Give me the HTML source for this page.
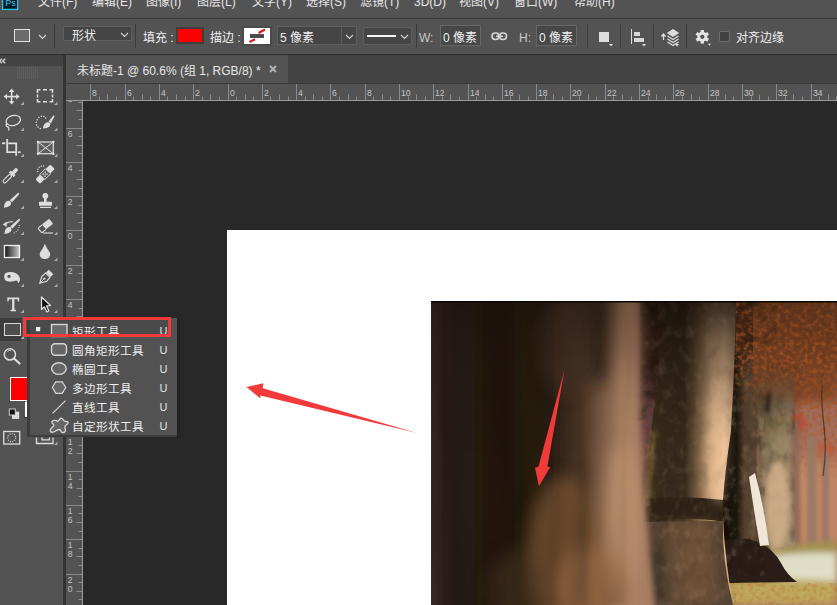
<!DOCTYPE html>
<html lang="zh-CN">
<head>
<meta charset="utf-8">
<style>
*{margin:0;padding:0;box-sizing:border-box}
html,body{width:837px;height:605px;overflow:hidden;background:#282828;font-family:"Liberation Sans",sans-serif;color:#e0e0e0;font-size:12px}
.a{position:absolute}
#menubar{left:0;top:0;width:837px;height:18px;background:#535353}
#mline{left:0;top:18px;width:837px;height:1px;background:#3a3a3a}
#opts{left:0;top:19px;width:837px;height:35px;background:#535353}
#oline{left:0;top:53.5px;width:837px;height:1.5px;background:#2e2e2e}
.mi{top:-5px;font-size:12px;line-height:14px;color:#e6e6e6;white-space:nowrap}
#tools{left:0;top:55px;width:63px;height:550px;background:#535353}
#thead{left:0;top:55px;width:63px;height:11px;background:#434343}
#tborder{left:63px;top:55px;width:3px;height:550px;background:#333}
#tabbar{left:66px;top:55px;width:771px;height:28px;background:#434343}
#tab{left:66px;top:55px;width:222px;height:28px;background:#535353}
#hruler{left:66px;top:83px;width:771px;height:18px;background:#535353}
#vruler{left:66px;top:83px;width:17px;height:522px;background:#535353}
#doc{left:227px;top:230px;width:610px;height:375px;background:#fff}
#photo{left:431px;top:301px;width:406px;height:304px;background:#3a2a20;overflow:hidden}
.sep{top:24px;width:1px;height:24px;background:#3b3b3b}
.box{border:1px solid #5f5f5f;background:#454545}
.box2{border:1px solid #676767;background:#474747}
.ot{font-size:12px;line-height:14px;color:#f0f0f0;white-space:nowrap}
.tabt{font-size:12px;line-height:16px;color:#e8e8e8;white-space:nowrap}
.mt{font-size:11.6px;line-height:15px;color:#eeeeee;white-space:nowrap}
.mu{font-size:11px;line-height:15px;color:#e4e4e4}
</style>
</head>
<body>
<div class="a" id="menubar"></div>
<div class="a" id="mline"></div>
<div class="a" id="opts"></div>
<div class="a" id="oline"></div>
<div class="a" id="tools"></div>
<div class="a" id="thead"></div>
<div class="a" id="tborder"></div>
<div class="a" id="tabbar"></div>
<div class="a" id="tab"></div>
<div class="a" id="hruler"></div>
<div class="a" id="vruler"></div>
<div class="a" id="doc"></div>
<div class="a" id="photo"></div>

<!-- tools -->
<svg class="a" style="left:0;top:0" width="63" height="605">
<!-- header -->
<path d="M2 58.8 L-0.5 61 L2 63.2 M5.3 58.8 L2.8 61 L5.3 63.2" stroke="#d8d8d8" stroke-width="1.3" fill="none"/>
<g stroke="#5c5c5c" stroke-width="1"><path d="M17.5 67V79 M19.5 67V79 M21.5 67V79 M23.5 67V79 M25.5 67V79 M27.5 67V79 M29.5 67V79 M31.5 67V79 M33.5 67V79 M35.5 67V79 M37.5 67V79"/></g>
<!-- move -->
<g fill="#dedede" stroke="none">
<rect x="6" y="95.8" width="11.2" height="1.6"/><rect x="10.8" y="91" width="1.6" height="11.2"/>
<path d="M11.6 88.6 L8.8 92 L14.4 92Z M11.6 104.6 L8.8 101.2 L14.4 101.2Z M3.6 96.6 L7 93.8 L7 99.4Z M19.6 96.6 L16.2 93.8 L16.2 99.4Z"/>
</g>
<path d="M20.5 105 L24 101.5 L24 105Z" fill="#a8a8a8"/>
<!-- marquee -->
<g stroke="#dedede" stroke-width="1.5" fill="none">
<path d="M37.5 93 V89.8 H40.5 M43 89.8 H47 M49.5 89.8 H52.5 V93 M52.5 94.6 V97.6 M52.5 99 V101.8 H49.5 M47 101.8 H43 M40.5 101.8 H37.5 V99 M37.5 97.6 V94.6"/>
</g>
<path d="M54 105 L57.5 101.5 L57.5 105Z" fill="#a8a8a8"/>
<!-- lasso -->
<ellipse cx="13.3" cy="120.5" rx="7.3" ry="5" transform="rotate(-15 13.3 120.5)" stroke="#dedede" stroke-width="1.3" fill="none"/>
<path d="M6.5 123 Q5.5 126.5 8 127 Q9.5 127.5 8.5 130.5" stroke="#dedede" stroke-width="1.3" fill="none"/>
<path d="M20.5 131 L24.0 127.5 L24.0 131Z" fill="#a8a8a8"/>
<!-- quick select -->
<g fill="#dedede"><circle cx="39" cy="117.5" r="0.75"/><circle cx="41.3" cy="116.3" r="0.75"/><circle cx="43.8" cy="116.6" r="0.75"/><circle cx="37.2" cy="119.7" r="0.75"/><circle cx="36.3" cy="122.3" r="0.75"/><circle cx="36.6" cy="124.9" r="0.75"/><circle cx="38" cy="127.1" r="0.75"/><circle cx="40.3" cy="128.4" r="0.75"/><circle cx="45.6" cy="118" r="0.75"/></g>
<path d="M42.8 128.5 Q43.5 123.8 47 122.3 Q49 122 50.3 123.5 Q50.5 126.5 47.5 127.8 Q45.3 128.6 42.8 128.5Z" fill="#dedede"/>
<path d="M48.5 121.5 L53.5 115.6 Q54.6 115 54.4 116.4 L51 123.3Z" fill="#dedede"/>
<path d="M54 131 L57.5 127.5 L57.5 131Z" fill="#a8a8a8"/>
<!-- crop -->
<g stroke="#dedede" stroke-width="1.8" fill="none">
<path d="M7.2 139 V152.2 H16.2"/><path d="M8.3 143.3 H16.2 V155.8"/><path d="M2 143.3 H5.3"/><path d="M18 152.2 H20.7"/>
</g>
<path d="M20.5 157 L24.0 153.5 L24.0 157Z" fill="#a8a8a8"/>
<!-- frame -->
<rect x="38" y="142" width="15.3" height="11.7" fill="#5e5e5e" stroke="#dedede" stroke-width="1.2"/>
<path d="M38 142 L53.3 153.7 M53.3 142 L38 153.7" stroke="#dedede" stroke-width="1"/>
<g fill="#dedede"><circle cx="38" cy="142" r="1.3"/><circle cx="53.3" cy="142" r="1.3"/><circle cx="38" cy="153.7" r="1.3"/><circle cx="53.3" cy="153.7" r="1.3"/></g>
<path d="M54 157 L57.5 153.5 L57.5 157Z" fill="#a8a8a8"/>
<!-- eyedropper -->
<g transform="rotate(45 12 174)">
<rect x="10.3" y="175.5" width="3.4" height="10.5" rx="1.7" stroke="#dedede" stroke-width="1.1" fill="none"/>
<rect x="8.6" y="172.4" width="6.8" height="2.8" fill="#dedede"/>
<rect x="10.2" y="166.5" width="3.6" height="6.5" rx="1.6" fill="#dedede"/>
</g>
<path d="M20.5 183 L24 179.5 L24 183Z" fill="#a8a8a8"/>
<!-- healing -->
<g fill="#dedede"><circle cx="37.6" cy="171.5" r="0.7"/><circle cx="37.9" cy="169.2" r="0.7"/><circle cx="39.2" cy="167.3" r="0.7"/><circle cx="41.2" cy="166.2" r="0.7"/><circle cx="43.5" cy="166" r="0.7"/></g>
<g transform="rotate(-45 45 174)">
<rect x="34.5" y="171" width="21" height="6.4" rx="1.2" fill="#dedede"/>
<rect x="41" y="170.6" width="8" height="7.2" fill="#535353" stroke="#dedede" stroke-width="0.9"/>
<g fill="#dedede"><circle cx="43.6" cy="172.9" r="0.85"/><circle cx="46.4" cy="172.9" r="0.85"/><circle cx="43.6" cy="175.5" r="0.85"/><circle cx="46.4" cy="175.5" r="0.85"/><circle cx="45" cy="174.2" r="0.6"/></g>
</g>
<path d="M54 183 L57.5 179.5 L57.5 183Z" fill="#a8a8a8"/>
<!-- brush -->
<path d="M3.8 207.8 Q4 203.5 6.3 201.6 Q8.6 200 10.6 201.4 Q11.6 203.6 10.2 205.5 Q8 207.6 3.8 207.8Z" fill="#dedede"/>
<path d="M9.8 200.2 L17.6 193.3 Q19 192.4 19.2 193.2 Q19.3 194 18.3 195.2 L12 202.3Z" fill="#dedede"/>
<path d="M20.5 209 L24 205.5 L24 209Z" fill="#a8a8a8"/>
<!-- stamp -->
<circle cx="45.3" cy="195.8" r="2.9" fill="#dedede"/>
<rect x="44" y="197.5" width="2.6" height="5" fill="#dedede"/>
<rect x="39" y="201.8" width="13" height="4" rx="0.6" fill="#dedede"/>
<rect x="40" y="206.8" width="11" height="1.2" fill="#dedede"/>
<path d="M54 209 L57.5 205.5 L57.5 209Z" fill="#a8a8a8"/>
<!-- history brush -->
<path d="M4.3 234 Q4.5 229.7 6.8 227.8 Q9.1 226.2 11.1 227.6 Q12.1 229.8 10.7 231.7 Q8.5 233.8 4.3 234Z" fill="#dedede"/>
<path d="M10.3 226.4 L18.4 219.3 Q19.8 218.4 20 219.2 Q20.1 220 19.1 221.2 L12.5 228.5Z" fill="#dedede"/>
<path d="M2.8 224.6 L6.8 221.6 L6.6 227Z" fill="#dedede"/><path d="M5.8 223.8 Q9 221 13 222" stroke="#dedede" stroke-width="1.1" fill="none"/>
<g fill="#dedede"><circle cx="19.3" cy="225.3" r="0.6"/><circle cx="18.9" cy="227.6" r="0.6"/><circle cx="17.9" cy="229.8" r="0.6"/><circle cx="16.2" cy="231.6" r="0.6"/><circle cx="14.2" cy="232.9" r="0.6"/></g>
<path d="M20.5 235 L24 231.5 L24 235Z" fill="#a8a8a8"/>
<!-- eraser -->
<g transform="rotate(-38 46 226)">
<rect x="44" y="222.3" width="9" height="6.4" rx="0.8" fill="#dedede"/>
<path d="M44 222.8 H39.2 Q38.4 222.8 38.4 223.6 V227.9 Q38.4 228.7 39.2 228.7 H44" fill="none" stroke="#dedede" stroke-width="1.1"/>
</g>
<path d="M43 233 H53" stroke="#dedede" stroke-width="1.1"/>
<path d="M54 235 L57.5 231.5 L57.5 235Z" fill="#a8a8a8"/>
<!-- gradient -->
<defs><linearGradient id="gr" x1="0" x2="1"><stop offset="0" stop-color="#111"/><stop offset="1" stop-color="#c8c8c8"/></linearGradient></defs>
<rect x="4.5" y="245.5" width="15" height="12" fill="url(#gr)" stroke="#f0f0f0" stroke-width="1.3"/>
<path d="M20.5 261 L24.0 257.5 L24.0 261Z" fill="#a8a8a8"/>
<!-- drop -->
<path d="M44.9 243.7 Q46.5 248 48.5 250.5 Q50.5 253 50 255.5 Q49 259 44.9 259 Q40.8 259 39.8 255.5 Q39.3 253 41.3 250.5 Q43.3 248 44.9 243.7Z" fill="#dedede"/>
<path d="M54 261 L57.5 257.5 L57.5 261Z" fill="#a8a8a8"/>
<!-- dodge -->
<path d="M4.2 277 Q3.8 273 8 272.2 Q12 271.5 15.5 273 Q19 274.5 20 278.5 Q20.2 281.5 18.5 283.2 Q18 281 16.5 280.5 Q11 282.5 6.5 281 Q4.3 280 4.2 277Z" fill="#dedede"/>
<circle cx="9" cy="276.3" r="1.6" fill="#535353"/>
<path d="M20.5 287 L24.0 283.5 L24.0 287Z" fill="#a8a8a8"/>
<!-- pen -->
<g transform="rotate(45 45 278)">
<path d="M42 274 L48 274 L48.5 279 L45 285.5 L41.5 279Z" fill="none" stroke="#dedede" stroke-width="1.1"/>
<rect x="41.8" y="269.5" width="6.4" height="3.8" fill="#dedede"/>
<path d="M45 279 V285" stroke="#dedede" stroke-width="0.9"/><circle cx="45" cy="278.8" r="1" fill="#dedede"/>
</g>
<path d="M54 287 L57.5 283.5 L57.5 287Z" fill="#a8a8a8"/>
<!-- type -->
<path d="M7.3 297.5 H19.2 V301.5 H18 L17.5 299.3 H14.4 V309.5 L16 310 V311.2 H10.5 V310 L12.1 309.5 V299.3 H9 L8.5 301.5 H7.3Z" fill="#dedede"/>
<path d="M20.5 313 L24.0 309.5 L24.0 313Z" fill="#a8a8a8"/>
<!-- path select -->
<path d="M41.5 297 V309.5 L44.4 306.8 L46.8 312 L48.8 311 L46.5 305.8 L50.5 305.5Z" fill="#111" stroke="#e4e4e4" stroke-width="1.2" stroke-linejoin="round"/>
<path d="M54 313 L57.5 309.5 L57.5 313Z" fill="#a8a8a8"/>
</svg>
<!-- lower tools -->
<div class="a" style="left:0;top:318px;width:22px;height:23px;background:#3c3c3c"></div>
<div class="a" style="left:4px;top:323px;width:16.5px;height:13px;border:1.5px solid #d8d8d8;background:#4e4e4e"></div>
<svg class="a" style="left:20px;top:335px" width="5" height="5"><path d="M0.5 4 L4 0.5 L4 4Z" fill="#a8a8a8"/></svg>
<svg class="a" style="left:0;top:340px" width="63" height="120">
<circle cx="9.9" cy="14.4" r="5.6" stroke="#dedede" stroke-width="1.5" fill="none"/>
<path d="M7.5 11.5 Q9 10 11 10.5" stroke="#dedede" stroke-width="0.8" fill="none"/>
<path d="M14 18.5 L19.5 23.5" stroke="#dedede" stroke-width="2.2" stroke-linecap="round"/>
<rect x="9" y="36" width="20" height="26" fill="#2a2a2a"/>
<rect x="10.4" y="37.4" width="19" height="23.2" fill="#ff0000" stroke="#fff" stroke-width="1.2"/>
<rect x="24" y="61" width="4" height="16.5" fill="#2a2a2a"/>
<rect x="24.8" y="61.5" width="2.6" height="15.5" fill="#fff"/>
<rect x="12" y="71.6" width="7.2" height="7.3" fill="#dcdcdc"/>
<rect x="9.3" y="69" width="6" height="6" fill="#111" stroke="#dcdcdc" stroke-width="0.9"/>
<rect x="3.7" y="91.5" width="16" height="12.5" stroke="#dedede" stroke-width="1.3" fill="none"/>
<circle cx="11.7" cy="97.7" r="4" stroke="#dedede" stroke-width="1.2" fill="none" stroke-dasharray="0.9 1.4"/>
<path d="M36.5 97.5 V103.5 H53 V97.5 M42 97.5 V99.8 H49.5 V97.5" stroke="#dedede" stroke-width="1.3" fill="none"/>
<path d="M54 105 L57.5 101.5 L57.5 105Z" fill="#a8a8a8"/>
</svg>
<!--PHOTO-->
<svg class="a" style="left:431px;top:301px" width="406" height="304" viewBox="0 0 406 304">
<defs>
<filter id="b8" x="-50%" y="-50%" width="200%" height="200%"><feGaussianBlur stdDeviation="8"/></filter>
<filter id="b5" x="-50%" y="-50%" width="200%" height="200%"><feGaussianBlur stdDeviation="5"/></filter>
<filter id="b3" x="-50%" y="-50%" width="200%" height="200%"><feGaussianBlur stdDeviation="3"/></filter>
<filter id="b2" x="-50%" y="-50%" width="200%" height="200%"><feGaussianBlur stdDeviation="2"/></filter>
<filter id="b1" x="-50%" y="-50%" width="200%" height="200%"><feGaussianBlur stdDeviation="1"/></filter>
<filter id="b06" x="-50%" y="-50%" width="200%" height="200%"><feGaussianBlur stdDeviation="0.6"/></filter>
<filter id="streak" x="0" y="0" width="100%" height="100%" color-interpolation-filters="sRGB">
 <feTurbulence type="fractalNoise" baseFrequency="0.05 0.004" numOctaves="2" seed="7"/>
 <feColorMatrix type="matrix" values="0 0 0 0 0  0 0 0 0 0  0 0 0 0 0  0 -2 0 0 1.1"/>
 <feGaussianBlur stdDeviation="2"/>
</filter>
<filter id="mottleD" x="0" y="0" width="100%" height="100%" color-interpolation-filters="sRGB">
 <feTurbulence type="fractalNoise" baseFrequency="0.09 0.06" numOctaves="3" seed="11"/>
 <feColorMatrix type="matrix" values="0 0 0 0 0.12  0 0 0 0 0.09  0 0 0 0 0.05  0 -2.5 0 0 1.35"/>
 <feGaussianBlur stdDeviation="0.7"/>
</filter>
<filter id="mottleL" x="0" y="0" width="100%" height="100%" color-interpolation-filters="sRGB">
 <feTurbulence type="fractalNoise" baseFrequency="0.11 0.08" numOctaves="3" seed="4"/>
 <feColorMatrix type="matrix" values="0 0 0 0 0.85  0 0 0 0 0.74  0 0 0 0 0.6  0 2.5 0 0 -1.25"/>
 <feGaussianBlur stdDeviation="0.7"/>
</filter>
<filter id="leaves" x="0" y="0" width="100%" height="100%" color-interpolation-filters="sRGB">
 <feTurbulence type="fractalNoise" baseFrequency="0.22" numOctaves="3" seed="21"/>
 <feColorMatrix type="matrix" values="0 0 0 0 0.7  0 0 0 0 0.36  0 0 0 0 0.16  0 3 0 0 -1.3"/>
 <feGaussianBlur stdDeviation="0.7"/>
</filter>
<filter id="darkleaves" x="0" y="0" width="100%" height="100%" color-interpolation-filters="sRGB">
 <feTurbulence type="fractalNoise" baseFrequency="0.06 0.09" numOctaves="4" seed="5"/>
 <feColorMatrix type="matrix" values="0 0 0 0 0.14  0 0 0 0 0.08  0 0 0 0 0.05  0 -3 0 0 1.5"/>
 <feGaussianBlur stdDeviation="0.8"/>
</filter>
<filter id="redleaves" x="0" y="0" width="100%" height="100%" color-interpolation-filters="sRGB">
 <feTurbulence type="fractalNoise" baseFrequency="0.25" numOctaves="2" seed="9"/>
 <feColorMatrix type="matrix" values="0 0 0 0 0.8  0 0 0 0 0.32  0 0 0 0 0.2  0 3 0 0 -1.5"/>
 <feGaussianBlur stdDeviation="0.8"/>
</filter>
<linearGradient id="bigt" x1="0" x2="214" gradientUnits="userSpaceOnUse">
<stop offset="0" stop-color="#3a2a26"/>
<stop offset="0.06" stop-color="#2a1e1a"/>
<stop offset="0.3" stop-color="#21180c"/>
<stop offset="0.55" stop-color="#281c12"/>
<stop offset="0.7" stop-color="#4a3424"/>
<stop offset="0.8" stop-color="#7e5e48"/>
<stop offset="0.9" stop-color="#b08666"/>
<stop offset="1" stop-color="#a87e64"/>
</linearGradient>
<linearGradient id="topdark" x1="0" x2="0" y1="0" y2="1">
<stop offset="0" stop-color="#140c08" stop-opacity="0.35"/>
<stop offset="0.2" stop-color="#140c08" stop-opacity="0.12"/>
<stop offset="0.5" stop-color="#140c08" stop-opacity="0"/>
</linearGradient>
<linearGradient id="t2" x1="212" x2="304" gradientUnits="userSpaceOnUse">
<stop offset="0" stop-color="#6a5036"/>
<stop offset="0.08" stop-color="#3a2e1e"/>
<stop offset="0.45" stop-color="#35291a"/>
<stop offset="0.6" stop-color="#7a6044"/>
<stop offset="0.74" stop-color="#d2a880"/>
<stop offset="0.88" stop-color="#f0c69c"/>
<stop offset="1" stop-color="#c49c76"/>
</linearGradient>
<linearGradient id="t2v" x1="0" x2="0" y1="0" y2="304" gradientUnits="userSpaceOnUse">
<stop offset="0" stop-color="#1a120a" stop-opacity="0.75"/>
<stop offset="0.12" stop-color="#1a120a" stop-opacity="0.45"/>
<stop offset="0.45" stop-color="#1a120a" stop-opacity="0"/>
</linearGradient>
<linearGradient id="t3" x1="288" x2="334" gradientUnits="userSpaceOnUse">
<stop offset="0" stop-color="#100c04"/>
<stop offset="0.38" stop-color="#1c150a"/>
<stop offset="0.56" stop-color="#54402e"/>
<stop offset="0.8" stop-color="#5e4836"/>
<stop offset="1" stop-color="#6a5640"/>
</linearGradient>
<linearGradient id="t4" x1="324" x2="362" gradientUnits="userSpaceOnUse">
<stop offset="0" stop-color="#5e4c34"/>
<stop offset="0.35" stop-color="#8e7c5e"/>
<stop offset="1" stop-color="#a08c6c"/>
</linearGradient>
<linearGradient id="fadeV" x1="0" x2="0" y1="0" y2="1"><stop offset="0" stop-color="#fff"/><stop offset="0.55" stop-color="#fff"/><stop offset="1" stop-color="#000"/></linearGradient>
<mask id="mFade" maskContentUnits="objectBoundingBox"><rect width="1" height="1" fill="url(#fadeV)"/></mask>
<linearGradient id="t4top" x1="0" x2="0" y1="60" y2="140" gradientUnits="userSpaceOnUse"><stop offset="0" stop-color="#3a2818" stop-opacity="0.7"/><stop offset="1" stop-color="#3a2818" stop-opacity="0"/></linearGradient>
</defs>
<!-- background haze -->
<rect width="406" height="304" fill="#a87260"/>
<g filter="url(#b8)">
<rect x="290" y="-20" width="130" height="90" fill="#74401f"/>
<rect x="350" y="160" width="60" height="90" fill="#c48a66"/>
<rect x="200" y="-10" width="45" height="230" fill="#2a1e12"/>
<rect x="205" y="80" width="22" height="90" fill="#6a4a4a"/>
</g>
<!-- foliage -->
<rect x="336" y="20" width="70" height="80" fill="#8a4e2e" filter="url(#b5)"/>
<rect x="285" y="0" width="121" height="130" filter="url(#leaves)" mask="url(#mFade)"/>
<rect x="285" y="0" width="121" height="70" filter="url(#darkleaves)" opacity="0.45" mask="url(#mFade)"/>
<rect x="345" y="95" width="61" height="90" filter="url(#leaves)" opacity="0.7" mask="url(#mFade)"/>
<rect x="205" y="0" width="30" height="200" filter="url(#redleaves)" opacity="0.45"/>
<rect x="205" y="0" width="30" height="120" filter="url(#darkleaves)" opacity="0.9"/>
<g filter="url(#b2)">
<ellipse cx="364" cy="122" rx="12" ry="8" fill="#c84a38" opacity="0.8"/>
<ellipse cx="395" cy="150" rx="10" ry="8" fill="#b8603e"/>
</g>

<!-- far trees -->
<g filter="url(#b2)">
<path d="M356 120 L368 118 L370 246 L357 246Z" fill="#8e6c58"/>
<path d="M376 135 L385 135 L386 246 L376 246Z" fill="#9a7864"/>
<path d="M391 150 L398 150 L398 246 L391 246Z" fill="#9a7466"/>
</g>
<!-- ground -->
<g filter="url(#b3)">
<path d="M280 250 L406 240 L406 304 L280 304Z" fill="#a09250"/>
<path d="M330 258 Q360 250 406 252 L406 282 Q385 278 355 279 Q335 276 330 258Z" fill="#e0ddc6"/>
<path d="M285 285 Q340 276 406 280 L406 304 L285 304Z" fill="#bea85c"/>
</g>
<rect x="285" y="282" width="121" height="22" filter="url(#leaves)" opacity="0.3"/>
<!-- tree 4 -->
<g filter="url(#b2)">
<path d="M322 60 Q345 66 364 72 Q359 120 359 170 Q359 220 363 246 L329 248 Q325 200 326 150 Q326 100 322 60Z" fill="url(#t4)"/>
<path d="M334 92 Q338 88 342 92 L339 112 Q335 114 333 110Z" fill="#2a1e14"/>
</g>
<rect x="322" y="62" width="42" height="186" filter="url(#mottleD)" opacity="0.3"/>
<rect x="322" y="62" width="42" height="186" filter="url(#mottleL)" opacity="0.15"/>
<rect x="320" y="58" width="46" height="92" fill="url(#t4top)" filter="url(#b3)"/>
<ellipse cx="346" cy="205" rx="13" ry="45" fill="#dcb892" opacity="0.75" filter="url(#b3)"/>
<path d="M397 0 Q398 40 394 62 Q388 84 393 125 Q396 150 392 175" stroke="#2a1a14" stroke-width="1.3" fill="none" opacity="0.6"/>
<!-- tree 3 -->
<g filter="url(#b06)">
<path d="M300 0 L333 0 Q331 40 328 90 Q325 140 326 175 Q329 215 336 243 Q348 262 358 281 L280 282 Q287 262 288 236 Q286 160 289 100 Q293 40 300 0Z" fill="url(#t3)"/>
<path d="M282 244 Q300 236 318 238 Q340 244 350 262 Q356 274 366 281 L278 282 Q283 262 282 244Z" fill="#2a1e12"/>
</g>
<rect x="284" y="20" width="50" height="255" filter="url(#mottleL)" opacity="0.22"/>
<rect x="284" y="20" width="50" height="255" filter="url(#mottleD)" opacity="0.3"/>
<path d="M324 172 Q333 205 338 244 L329 245 Q323 210 318 176Z" fill="#efe6d8" filter="url(#b06)"/>
<!-- foliage over tree 3/4 top -->
<rect x="290" y="-5" width="40" height="85" fill="#4e2c1a" mask="url(#mFade)"/>
<rect x="322" y="-5" width="84" height="110" fill="#7e4424" mask="url(#mFade)"/>
<rect x="296" y="0" width="110" height="105" filter="url(#leaves)" opacity="0.9" mask="url(#mFade)"/>
<rect x="296" y="0" width="50" height="60" filter="url(#darkleaves)" opacity="0.6" mask="url(#mFade)"/>
<!-- tree 2 -->
<g filter="url(#b06)">
<path d="M234 0 L305 0 Q304 60 300 130 Q294 170 292 199 Q291 240 302 304 L209 304 Q211 240 213 185 Q222 120 227 70 Q230 30 234 0Z" fill="url(#t2)"/>
<path d="M214 198 Q255 194 292 199 L292 221 Q255 214 212 222Z" fill="#2e2418"/>
<path d="M212 221 L292 220 Q291 260 302 304 L209 304Z" fill="#574330"/>
<path d="M219 130 Q223 128 225 135 L219 205 L214 205 Q215 165 219 130Z" fill="#9a7a40" opacity="0.4" filter="url(#b1)"/>
</g>
<g filter="url(#b5)">
<path d="M240 221 L282 221 L288 304 L242 304Z" fill="#6e5238" opacity="0.9"/>
<path d="M212 250 L232 250 L232 304 L209 304Z" fill="#3a3020" opacity="0.8"/>
</g>
<rect x="209" y="0" width="96" height="304" fill="url(#t2v)"/>
<rect x="209" y="0" width="96" height="304" filter="url(#mottleL)" opacity="0.15"/>
<rect x="209" y="0" width="96" height="304" filter="url(#mottleD)" opacity="0.15"/>
<ellipse cx="287" cy="140" rx="9" ry="65" fill="#eec49a" opacity="0.45" filter="url(#b5)"/>
<!-- big blurry trunk -->
<g filter="url(#b3)">
<path d="M-20 -10 L208 -10 Q208 100 211 150 Q216 230 226 320 L-20 320Z" fill="url(#bigt)"/>
</g>
<g filter="url(#b8)">
<ellipse cx="168" cy="25" rx="16" ry="60" fill="#241a10" opacity="0.75"/>
<ellipse cx="135" cy="255" rx="40" ry="80" fill="#7a5434" opacity="0.7"/>
<ellipse cx="135" cy="45" rx="25" ry="50" fill="#4a3428" opacity="0.6"/>
<ellipse cx="190" cy="215" rx="16" ry="70" fill="#c89a74" opacity="0.55"/>
<ellipse cx="200" cy="40" rx="14" ry="40" fill="#9a6e58" opacity="0.6"/>
<ellipse cx="85" cy="290" rx="30" ry="40" fill="#4a3626" opacity="0.5"/>
<ellipse cx="160" cy="285" rx="35" ry="40" fill="#a06e46" opacity="0.55"/>
</g>
<rect x="0" y="0" width="205" height="304" filter="url(#streak)" opacity="0.25"/>
<rect width="406" height="304" fill="url(#topdark)"/>
<rect width="406" height="1.5" fill="#0a0605"/>
</svg>
<!--/PHOTO-->
<!-- arrows -->
<svg class="a" style="left:227px;top:230px" width="610" height="375">
<path d="M19.4 157 L36.4 153.2 L35.7 158.2 L190 203.1 L33.4 165.4 L33.4 168.4Z" fill="#f23a3a"/>
<path d="M337.5 139.7 L320.4 236.6 L323.1 237.3 L312 256.3 L308 237.8 L311.5 236.6 Z" fill="#f23a3a"/>
</svg>
<!-- rulers -->
<svg class="a" style="left:66px;top:84px" width="771" height="17"><path d="M24.5 0V16 M33.5 12.5V16 M41.5 10.5V16 M50.5 12.5V16 M59.5 0V16 M67.5 12.5V16 M76.5 10.5V16 M84.5 12.5V16 M93.5 0V16 M101.5 12.5V16 M110.5 10.5V16 M119.5 12.5V16 M127.5 0V16 M136.5 12.5V16 M144.5 10.5V16 M153.5 12.5V16 M162.5 0V16 M170.5 12.5V16 M179.5 10.5V16 M187.5 12.5V16 M196.5 0V16 M204.5 12.5V16 M213.5 10.5V16 M222.5 12.5V16 M230.5 0V16 M239.5 12.5V16 M247.5 10.5V16 M256.5 12.5V16 M264.5 0V16 M273.5 12.5V16 M282.5 10.5V16 M290.5 12.5V16 M299.5 0V16 M307.5 12.5V16 M316.5 10.5V16 M324.5 12.5V16 M333.5 0V16 M342.5 12.5V16 M350.5 10.5V16 M359.5 12.5V16 M367.5 0V16 M376.5 12.5V16 M384.5 10.5V16 M393.5 12.5V16 M402.5 0V16 M410.5 12.5V16 M419.5 10.5V16 M427.5 12.5V16 M436.5 0V16 M444.5 12.5V16 M453.5 10.5V16 M462.5 12.5V16 M470.5 0V16 M479.5 12.5V16 M487.5 10.5V16 M496.5 12.5V16 M504.5 0V16 M513.5 12.5V16 M522.5 10.5V16 M530.5 12.5V16 M539.5 0V16 M547.5 12.5V16 M556.5 10.5V16 M565.5 12.5V16 M573.5 0V16 M582.5 12.5V16 M590.5 10.5V16 M599.5 12.5V16 M607.5 0V16 M616.5 12.5V16 M625.5 10.5V16 M633.5 12.5V16 M642.5 0V16 M650.5 12.5V16 M659.5 10.5V16 M667.5 12.5V16 M676.5 0V16 M685.5 12.5V16 M693.5 10.5V16 M702.5 12.5V16 M710.5 0V16 M719.5 12.5V16 M727.5 10.5V16 M736.5 12.5V16 M745.5 0V16 M753.5 12.5V16 M762.5 10.5V16 M770.5 12.5V16" stroke="#8a8a8a" stroke-width="1"/><path d="M0 16.5H771" stroke="#9a9a9a" stroke-width="1"/><g fill="#c4c4c4" font-size="8.6" font-family="Liberation Sans"><text x="26.0" y="11.5">8</text><text x="61.0" y="11.5">6</text><text x="95.0" y="11.5">4</text><text x="129.0" y="11.5">2</text><text x="164.0" y="11.5">0</text><text x="198.0" y="11.5">2</text><text x="232.0" y="11.5">4</text><text x="266.0" y="11.5">6</text><text x="301.0" y="11.5">8</text><text x="335.0" y="11.5">10</text><text x="369.0" y="11.5">12</text><text x="404.0" y="11.5">14</text><text x="438.0" y="11.5">16</text><text x="472.0" y="11.5">18</text><text x="506.0" y="11.5">20</text><text x="541.0" y="11.5">22</text><text x="575.0" y="11.5">24</text><text x="609.0" y="11.5">26</text><text x="644.0" y="11.5">28</text><text x="678.0" y="11.5">30</text><text x="712.0" y="11.5">32</text><text x="747.0" y="11.5">34</text></g></svg>
<svg class="a" style="left:66px;top:101px" width="17" height="504"><g transform="translate(0,-17)"><path d="M0 9.5H16 M12.5 18.5H16 M10.5 26.5H16 M12.5 35.5H16 M0 44.5H16 M12.5 52.5H16 M10.5 61.5H16 M12.5 69.5H16 M0 78.5H16 M12.5 86.5H16 M10.5 95.5H16 M12.5 104.5H16 M0 112.5H16 M12.5 121.5H16 M10.5 129.5H16 M12.5 138.5H16 M0 146.5H16 M12.5 155.5H16 M10.5 164.5H16 M12.5 172.5H16 M0 181.5H16 M12.5 189.5H16 M10.5 198.5H16 M12.5 207.5H16 M0 215.5H16 M12.5 224.5H16 M10.5 232.5H16 M12.5 241.5H16 M0 249.5H16 M12.5 258.5H16 M10.5 267.5H16 M12.5 275.5H16 M0 284.5H16 M12.5 292.5H16 M10.5 301.5H16 M12.5 309.5H16 M0 318.5H16 M12.5 327.5H16 M10.5 335.5H16 M12.5 344.5H16 M0 352.5H16 M12.5 361.5H16 M10.5 369.5H16 M12.5 378.5H16 M0 387.5H16 M12.5 395.5H16 M10.5 404.5H16 M12.5 412.5H16 M0 421.5H16 M12.5 429.5H16 M10.5 438.5H16 M12.5 447.5H16 M0 455.5H16 M12.5 464.5H16 M10.5 472.5H16 M12.5 481.5H16 M0 490.5H16 M12.5 498.5H16 M10.5 507.5H16 M12.5 515.5H16" stroke="#8a8a8a" stroke-width="1"/><path d="M16.5 0V521" stroke="#9a9a9a" stroke-width="1"/><g fill="#c4c4c4" font-size="8.6" font-family="Liberation Sans"><text x="1.8" y="18.3">8</text><text x="1.8" y="53.3">6</text><text x="1.8" y="87.3">4</text><text x="1.8" y="121.3">2</text><text x="1.8" y="155.3">0</text><text x="1.8" y="190.3">2</text><text x="1.8" y="224.3">4</text><text x="1.8" y="258.3">6</text><text x="1.8" y="293.3">8</text><text x="1.8" y="327.3">1</text><text x="1.8" y="336.3">0</text><text x="1.8" y="361.3">1</text><text x="1.8" y="370.3">2</text><text x="1.8" y="396.3">1</text><text x="1.8" y="405.3">4</text><text x="1.8" y="430.3">1</text><text x="1.8" y="439.3">6</text><text x="1.8" y="464.3">1</text><text x="1.8" y="473.3">8</text><text x="1.8" y="499.3">2</text><text x="1.8" y="508.3">0</text></g></g></svg>
<div class="a" style="left:66px;top:83px;width:771px;height:1px;background:#3a3a3a"></div>
<!-- menu items -->
<svg class="a" style="left:0;top:0" width="20" height="12"><rect x="2.6" y="-3" width="15" height="12.4" fill="#001c2a" stroke="#27c3f2" stroke-width="1.3"/><text x="5.2" y="6" font-family="Liberation Sans" font-size="9" fill="#3ccbee">Ps</text></svg>

<div class="a mi" style="left:38px">文件(F)</div>
<div class="a mi" style="left:92px">编辑(E)</div>
<div class="a mi" style="left:146px">图像(I)</div>
<div class="a mi" style="left:197px">图层(L)</div>
<div class="a mi" style="left:252px">文字(Y)</div>
<div class="a mi" style="left:306px">选择(S)</div>
<div class="a mi" style="left:360px">滤镜(T)</div>
<div class="a mi" style="left:414px">3D(D)</div>
<div class="a mi" style="left:459px">视图(V)</div>
<div class="a mi" style="left:514px">窗口(W)</div>
<div class="a mi" style="left:574px">帮助(H)</div>

<!-- options bar -->
<div class="a" style="left:14px;top:29px;width:16px;height:13px;border:1.5px solid #e2e2e2;background:#6b6b6b"></div>
<svg class="a" style="left:38px;top:34px" width="9" height="6"><path d="M1 1 L4.5 4.5 L8 1" stroke="#cfcfcf" stroke-width="1.2" fill="none"/></svg>
<div class="a sep" style="left:54px"></div>
<div class="a box" style="left:63px;top:26px;width:69px;height:15px"></div>
<div class="a ot" style="left:72px;top:29.0px">形状</div>
<svg class="a" style="left:120px;top:32px" width="9" height="6"><path d="M1 1 L4.5 4.5 L8 1" stroke="#cfcfcf" stroke-width="1.2" fill="none"/></svg>
<div class="a sep" style="left:135px"></div>
<div class="a ot" style="left:143px;top:30.5px">填充 :</div>
<div class="a" style="left:176px;top:27px;width:28px;height:17px;background:#ff0000;border:2px solid #3f3f3f"></div>
<div class="a ot" style="left:210px;top:30.5px">描边 :</div>
<div class="a" style="left:242px;top:26px;width:30px;height:20px;border:2.8px solid #4a4a4a;background:#fff"></div>
<div class="a" style="left:250px;top:34px;width:14px;height:4px;background:#4a4a4a"></div>
<svg class="a" style="left:244px;top:28px" width="26" height="16"><path d="M5.5 14 L11 11.2" stroke="#d42020" stroke-width="2.2"/><path d="M14.5 5 L21 1.5" stroke="#d42020" stroke-width="2.2"/></svg>
<div class="a box" style="left:277px;top:26px;width:80px;height:19px"></div>
<div class="a" style="left:341px;top:27px;width:1px;height:17px;background:#5e5e5e"></div>
<div class="a ot" style="left:280px;top:30.5px">5 像素</div>
<svg class="a" style="left:345px;top:34px" width="9" height="6"><path d="M1 1 L4.5 4.5 L8 1" stroke="#cfcfcf" stroke-width="1.2" fill="none"/></svg>
<div class="a box" style="left:363px;top:27px;width:49px;height:18px;border-radius:3px"></div>
<div class="a" style="left:367px;top:35px;width:29px;height:2.4px;background:#f4f4f4"></div>
<svg class="a" style="left:400px;top:34px" width="9" height="6"><path d="M1 1 L4.5 4.5 L8 1" stroke="#cfcfcf" stroke-width="1.2" fill="none"/></svg>
<div class="a sep" style="left:415.5px"></div>
<div class="a ot" style="left:419px;top:30.5px;color:#c9c9c9">W:</div>
<div class="a box2" style="left:440px;top:25px;width:41px;height:21px"></div>
<div class="a ot" style="left:443px;top:30.5px">0 像素</div>
<svg class="a" style="left:491px;top:32px" width="17" height="9"><rect x="1" y="1" width="7" height="6.5" rx="3.2" stroke="#d6d6d6" stroke-width="1.6" fill="none"/><rect x="8.5" y="1" width="7" height="6.5" rx="3.2" stroke="#d6d6d6" stroke-width="1.6" fill="none"/><path d="M5 4.25 H12" stroke="#d6d6d6" stroke-width="1.6"/></svg>
<div class="a ot" style="left:519px;top:30.5px;color:#c9c9c9">H:</div>
<div class="a box2" style="left:536px;top:25px;width:41px;height:21px"></div>
<div class="a ot" style="left:539px;top:30.5px">0 像素</div>
<div class="a sep" style="left:587px"></div>
<div class="a" style="left:599px;top:32px;width:10px;height:10px;background:#dcdcdc"></div>
<svg class="a tri" style="left:608.5px;top:44px" width="4" height="3"><path d="M0 0 H4 L2 2.5Z" fill="#e0e0e0"/></svg>
<div class="a sep" style="left:620px"></div>
<div class="a" style="left:631px;top:29px;width:1.3px;height:15px;background:#dcdcdc"></div>
<div class="a" style="left:633.5px;top:32px;width:6.5px;height:4px;background:#d6d6d6"></div>
<div class="a" style="left:633.5px;top:38px;width:10.5px;height:4px;background:#d6d6d6"></div>
<svg class="a tri" style="left:642px;top:44px" width="4" height="3"><path d="M0 0 H4 L2 2.5Z" fill="#e0e0e0"/></svg>
<div class="a sep" style="left:653px"></div>
<svg class="a" style="left:660px;top:28px" width="21" height="19"><path d="M3.5 12 V6.5 M1.5 8.5 L3.5 6 L5.5 8.5" stroke="#e0e0e0" stroke-width="1.3" fill="none"/><path d="M7.5 5 L13 1.5 L18.5 5 L13 8.5Z" fill="#dcdcdc" stroke="#dcdcdc" stroke-width="1"/><path d="M7.5 8 L13 11.5 L18.5 8" stroke="#dcdcdc" stroke-width="1.3" fill="none"/><path d="M7.5 11 L13 14.5 L18.5 11" stroke="#dcdcdc" stroke-width="1.3" fill="none"/><path d="M7.5 14 L13 17.5 L18.5 14" stroke="#dcdcdc" stroke-width="1.3" fill="none"/><path d="M15 16 H19 L17 18.5Z" fill="#e0e0e0"/></svg>
<div class="a sep" style="left:686px"></div>
<svg class="a" style="left:695px;top:30px" width="17" height="17"><g transform="translate(7.3,6.8)"><circle r="5" fill="#e2e2e2"/><g fill="#e2e2e2"><rect x="-1.7" y="-6.8" width="3.4" height="13.6"/><rect x="-1.7" y="-6.8" width="3.4" height="13.6" transform="rotate(60)"/><rect x="-1.7" y="-6.8" width="3.4" height="13.6" transform="rotate(120)"/></g><circle r="2.1" fill="#535353"/></g><path d="M13 13.8 H16 L14.5 15.8Z" fill="#e0e0e0"/></svg>
<div class="a" style="left:719px;top:31px;width:11px;height:11px;border:1px solid #6d6d6d;border-radius:2px;background:#414141"></div>
<div class="a ot" style="left:736px;top:30.5px">对齐边缘</div>

<!-- tab -->
<div class="a tabt" style="left:77px;top:62.5px">未标题-1 @ 60.6% (组 1, RGB/8) *</div>
<svg class="a" style="left:269px;top:65px" width="8" height="8"><path d="M1 1 L7 7 M7 1 L1 7" stroke="#b4b4b4" stroke-width="1.8"/></svg>
<!-- popup menu -->
<div class="a" style="left:177px;top:319px;width:3px;height:119px;background:rgba(0,0,0,0.12)"></div>
<div class="a" style="left:27px;top:318px;width:150px;height:119px;background:#3d3d3d"></div>
<div class="a" style="left:30px;top:318px;width:147px;height:116.5px;background:#525252"></div>
<div class="a" style="left:30px;top:319px;width:140px;height:16px;background:#4a4a4a"></div>
<svg class="a" style="left:30px;top:318px" width="147" height="118">
<rect x="6" y="9" width="4.2" height="4.2" fill="#f2f2f2"/>
<rect x="21.5" y="6.5" width="15.5" height="12" fill="#6a6a6a" stroke="#d8d8d8" stroke-width="1.4"/>
<rect x="21.5" y="25.8" width="15" height="11.5" rx="3.5" fill="#666" stroke="#d8d8d8" stroke-width="1.4"/>
<ellipse cx="28.9" cy="50.6" rx="7.3" ry="5.8" fill="#666" stroke="#d8d8d8" stroke-width="1.4"/>
<path d="M25.8 63.8 H32.2 L35.8 69.5 L32.2 75.4 H25.8 L22.4 69.5Z" fill="#666" stroke="#d8d8d8" stroke-width="1.2"/>
<path d="M22.5 95.4 L35.5 82.6" stroke="#d8d8d8" stroke-width="1.2"/>
<path d="M29.5 101.5 Q31.5 99 33 101.5 Q34 104 37.5 103.5 Q39 105 37 106.5 Q34.5 107.5 35 110 Q36.5 113 34 114.5 Q31.5 115 30.5 112.5 Q29.5 110.5 26.5 112.5 Q22 115.5 20.5 113.5 Q19.5 111.5 22.5 109 Q25 107 22.5 105.5 Q20.5 103.5 23.5 102.5 Q26.5 102 27.5 103.5 Q28.5 103 29.5 101.5Z" fill="#666" stroke="#d8d8d8" stroke-width="1.3"/>
</svg>
<div class="a mt" style="left:72px;top:323.5px">矩形工具</div>
<div class="a mt" style="left:72px;top:342.5px">圆角矩形工具</div>
<div class="a mt" style="left:72px;top:361.5px">椭圆工具</div>
<div class="a mt" style="left:72px;top:380.5px">多边形工具</div>
<div class="a mt" style="left:72px;top:399.5px">直线工具</div>
<div class="a mt" style="left:72px;top:418.5px">自定形状工具</div>
<div class="a mu" style="left:159.5px;top:323.5px">U</div>
<div class="a mu" style="left:159.5px;top:342.5px">U</div>
<div class="a mu" style="left:159.5px;top:361.5px">U</div>
<div class="a mu" style="left:159.5px;top:380.5px">U</div>
<div class="a mu" style="left:159.5px;top:399.5px">U</div>
<div class="a mu" style="left:159.5px;top:418.5px">U</div>
<div class="a" style="left:23px;top:317px;width:147.5px;height:20px;border:3px solid #f23a3a"></div>
</body>
</html>
